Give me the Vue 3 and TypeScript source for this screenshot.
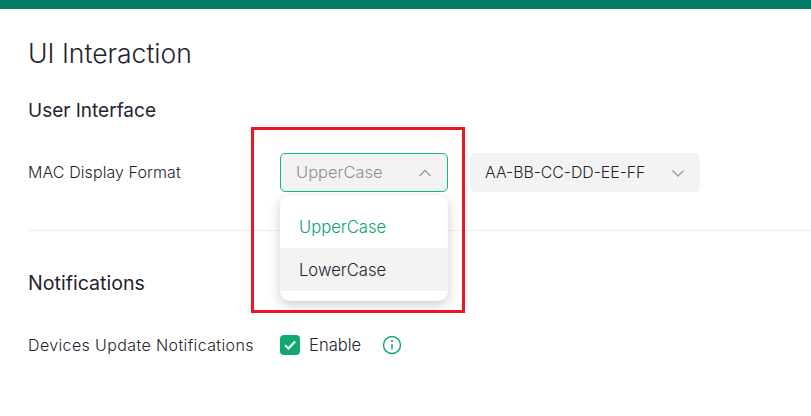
<script setup lang="ts">
const options: string[] = ['UpperCase', 'LowerCase']
</script>

<template>
  <div class="page">
    <div class="topbar"></div>
    <main class="content">
      <h1 class="title">UI Interaction</h1>
      <h2 class="section first">User Interface</h2>
      <div class="row select-row">
        <span class="label mac">MAC Display Format</span>
        <div class="select open">
          <span class="value placeholder">UpperCase</span>
          <svg class="chev" width="14" height="14" viewBox="0 0 14 14"><path d="M1.5 10 7 4.5 12.5 10" /></svg>
          <ul class="menu">
            <li v-for="(o, i) in options" :key="o" :class="['opt', { active: i === 0, hover: i === 1 }]">{{ o }}</li>
          </ul>
        </div>
        <div class="select wide">
          <span class="value">AA-BB-CC-DD-EE-FF</span>
          <svg class="chev" width="14" height="14" viewBox="0 0 14 14"><path d="M1.5 4.5 7 10 12.5 4.5" /></svg>
        </div>
      </div>
      <hr class="divider" />
      <h2 class="section">Notifications</h2>
      <div class="row notify-row">
        <span class="label devices">Devices Update Notifications</span>
        <label class="check">
          <span class="box">
            <svg width="16" height="16" viewBox="0 0 16 16"><path d="M3 8.2 6.5 11.5 13 4.6" /></svg>
          </span>
          <span>Enable</span>
        </label>
        <svg class="info" width="20" height="20" viewBox="0 0 20 20">
          <circle cx="10" cy="10" r="8.5" />
          <path d="M10 9v5.4" />
          <circle class="dot" cx="10" cy="6" r="1.1" />
        </svg>
      </div>
    </main>
    <div class="highlight"></div>
  </div>
</template>

<style scoped>
.page {
  position: relative;
  width: 811px;
  height: 416px;
  overflow: hidden;
  background: #fff;
  color: #1f2430;
  font-family: Inter, "Noto Sans", sans-serif;
}
.topbar { height: 9px; background: #047d68; }
.content { padding: 0 28px; }
.title {
  margin: 26px 0 0;
  font-size: 26.5px;
  line-height: 36px;
  font-weight: 300;
}
.section {
  margin: 0;
  font-size: 19px;
  line-height: 26px;
  font-weight: 400;
}
.section.first { margin-top: 27px; }
.row { display: flex; align-items: center; font-size: 16px; }
.label { font-weight: 300; width: 252px; flex: none; }
.label.devices { letter-spacing: 0.38px; }
.label.mac { letter-spacing: 0.08px; padding-bottom: 2px; }
.select-row { margin-top: 29px; }
.select {
  position: relative;
  box-sizing: border-box;
  height: 39px;
  display: flex;
  align-items: center;
  justify-content: space-between;
  padding: 0 15px;
  background: #f3f3f3;
  border-radius: 5px;
  font-weight: 300;
}
.value { padding-bottom: 1px; }
.select.open {
  width: 168px;
  border: 1px solid #10b981;
  margin-right: 22px;
  font-size: 16.5px;
}
.placeholder { color: #8f8f8f; }
.select.wide { width: 230px; font-size: 15.8px; }
.chev { fill: none; stroke: #9a9a9a; stroke-width: 1.3; }
.menu {
  position: absolute;
  top: 41px;
  left: -1px;
  width: 168px;
  margin: 0;
  padding: 10px 0;
  list-style: none;
  background: #fff;
  border-radius: 10px;
  box-shadow: 0 4px 12px rgba(0, 0, 0, 0.2);
  z-index: 2;
}
.opt { height: 43px; line-height: 45px; padding-left: 19px; font-size: 16.6px; }
.opt.active { color: #0aa56c; }
.opt.hover { background: #f3f3f3; }
.divider {
  margin: 38px 0 0;
  border: 0;
  border-top: 1px solid #ededed;
  width: 783px;
}
.section:not(.first) { margin-top: 39px; font-size: 19.6px; }
.notify-row { margin-top: 37px; height: 24px; }
.check { display: flex; align-items: center; gap: 9px; font-weight: 300; font-size: 16.6px; }
.box {
  width: 20px;
  height: 20px;
  background: #0fa86f;
  border-radius: 4px;
  display: flex;
  align-items: center;
  justify-content: center;
}
.box svg { fill: none; stroke: #fff; stroke-width: 2.2; }
.info { margin-left: 21px; fill: none; stroke: #12a873; stroke-width: 1.5; }
.info .dot { fill: #12a873; stroke: none; }
.highlight {
  position: absolute;
  left: 251px;
  top: 127px;
  width: 214px;
  height: 186px;
  box-sizing: border-box;
  border: 3px solid #ea1621;
  pointer-events: none;
  z-index: 3;
}
</style>
